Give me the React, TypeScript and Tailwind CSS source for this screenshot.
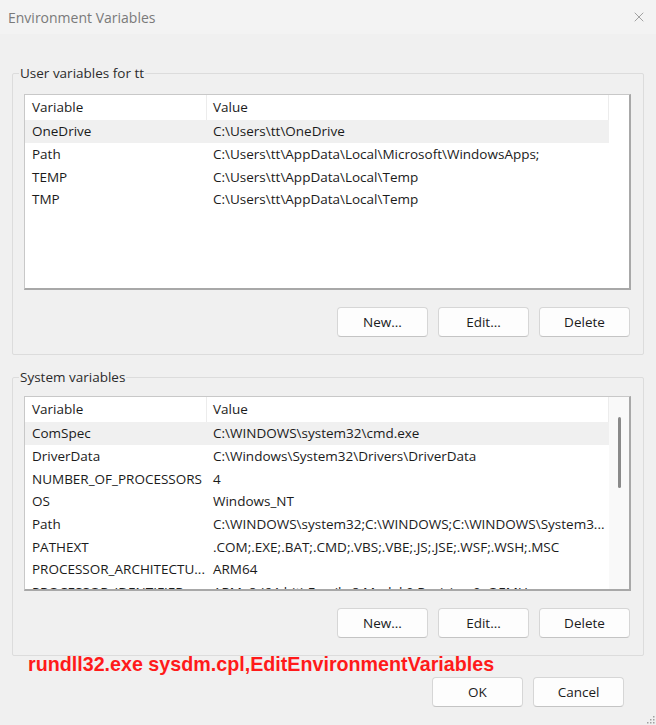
import { X } from 'lucide-react';

type Row = { name: string; value: string };

const USER_VARS: Row[] = [
  { name: 'OneDrive', value: 'C:\\Users\\tt\\OneDrive' },
  { name: 'Path', value: 'C:\\Users\\tt\\AppData\\Local\\Microsoft\\WindowsApps;' },
  { name: 'TEMP', value: 'C:\\Users\\tt\\AppData\\Local\\Temp' },
  { name: 'TMP', value: 'C:\\Users\\tt\\AppData\\Local\\Temp' },
];

const SYSTEM_VARS: Row[] = [
  { name: 'ComSpec', value: 'C:\\WINDOWS\\system32\\cmd.exe' },
  { name: 'DriverData', value: 'C:\\Windows\\System32\\Drivers\\DriverData' },
  { name: 'NUMBER_OF_PROCESSORS', value: '4' },
  { name: 'OS', value: 'Windows_NT' },
  { name: 'Path', value: 'C:\\WINDOWS\\system32;C:\\WINDOWS;C:\\WINDOWS\\System3...' },
  { name: 'PATHEXT', value: '.COM;.EXE;.BAT;.CMD;.VBS;.VBE;.JS;.JSE;.WSF;.WSH;.MSC' },
  { name: 'PROCESSOR_ARCHITECTU...', value: 'ARM64' },
  { name: 'PROCESSOR_IDENTIFIER', value: 'ARMv8 (64-bit) Family 8 Model 0 Revision 0, QEMU' },
];

function Button({ label }: { label: string }) {
  return (
    <button className="h-[30px] w-[91px] rounded-[4px] border border-[#d6d6d6] border-b-[#c4c4c4] bg-[#fdfdfd] text-[13.5px] text-[#1b1b1b]">
      {label}
    </button>
  );
}

// Windows list view: header, rows, and a scroll gutter on the right.
function VarList({ rows, height, scroll }: { rows: Row[]; height: string; scroll?: boolean }) {
  return (
    <div
      className={`flex overflow-hidden border-t border-l border-[#c8c8c8] border-r-2 border-b-2 border-r-[#a8a8a8] border-b-[#a8a8a8] bg-white ${height}`}
    >
      <div className="flex min-w-0 flex-1 flex-col">
        <div className="flex h-[25px] shrink-0 items-center border-r border-[#ececec]">
          <div className="flex h-full w-[182px] items-center border-r border-[#ececec] pl-[7px]">Variable</div>
          <div className="pl-[6px]">Value</div>
        </div>
        {rows.map((r, i) => (
          <div
            key={r.name}
            className={`flex h-[22.7px] shrink-0 items-center whitespace-nowrap ${i === 0 ? 'bg-[#f0f0f0]' : ''}`}
          >
            <div className="w-[182px] overflow-hidden pl-[7px]">{r.name}</div>
            <div className="pl-[6px]">{r.value}</div>
          </div>
        ))}
      </div>
      <div className={`flex w-[20px] shrink-0 justify-center ${scroll ? 'bg-[#f9f9f9]' : ''}`}>
        {scroll && <div className="mt-[20px] h-[71px] w-[3px] rounded-full bg-[#8a8a8a]" />}
      </div>
    </div>
  );
}

function Group({
  title,
  rows,
  listTop,
  height,
  scroll,
}: {
  title: string;
  rows: Row[];
  listTop: string;
  height: string;
  scroll?: boolean;
}) {
  return (
    <fieldset className="mx-3 rounded-[2px] border border-[#dcdcdc] pb-[17px]">
      <legend className="ml-[6px] px-[1px] leading-5 text-[#2b2b2b]">{title}</legend>
      <div className={`ml-[11px] mr-[12px] ${listTop}`}>
        <VarList rows={rows} height={height} scroll={scroll} />
      </div>
      <div className="mr-[13px] mt-[17px] flex justify-end gap-[10px]">
        <Button label="New..." />
        <Button label="Edit..." />
        <Button label="Delete" />
      </div>
    </fieldset>
  );
}

export default function App() {
  return (
    <div
      className="relative h-[725px] w-[656px] overflow-hidden bg-[#f0f0f0] text-[13.5px] text-[#1b1b1b]"
      style={{ fontFamily: '"Segoe UI", "Open Sans", "Noto Sans", sans-serif' }}
    >
      <div className="flex h-[34px] items-center justify-between bg-[#f3f3f3] pl-2 pr-[9px]">
        <span className="text-[14px] text-[#7a7a7a]">Environment Variables</span>
        <X size={16} strokeWidth={1} className="text-[#777]" />
      </div>

      <div className="mt-[29px]">
        <Group title="User variables for tt" rows={USER_VARS} listTop="mt-[11px]" height="h-[196px]" />
      </div>
      <div className="mt-[12px]">
        <Group
          title="System variables"
          rows={SYSTEM_VARS}
          listTop="mt-[9px]"
          height="h-[195px]"
          scroll
        />
      </div>

      <div
        className="-mt-[3px] h-[22px] pl-[28px] text-[19.7px] font-bold leading-[22px] text-[#ff1a1a]"
        style={{ fontFamily: '"Liberation Sans", Arial, sans-serif' }}
      >
        rundll32.exe sysdm.cpl,EditEnvironmentVariables
      </div>

      <div className="mt-[2px] flex justify-end gap-[10px] pr-[32px]">
        <Button label="OK" />
        <Button label="Cancel" />
      </div>

      <svg className="absolute bottom-0 right-0" width="12" height="12" viewBox="0 0 12 12">
        <g fill="#a0a0a0">
          <rect x="9" y="3" width="1.5" height="1.5" />
          <rect x="6" y="6" width="1.5" height="1.5" />
          <rect x="9" y="6" width="1.5" height="1.5" />
          <rect x="3" y="9" width="1.5" height="1.5" />
          <rect x="6" y="9" width="1.5" height="1.5" />
          <rect x="9" y="9" width="1.5" height="1.5" />
        </g>
      </svg>
    </div>
  );
}
